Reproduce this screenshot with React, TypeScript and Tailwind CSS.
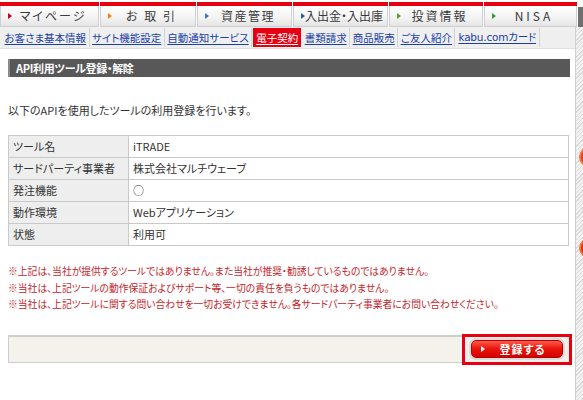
const TABS = [
  { label: "マイページ", width: "w-[100px]", arrow: "border-l-[#d7000f]", track: "tracking-[2px]" },
  { label: "お 取 引", width: "w-[97px]", arrow: "border-l-[#e88a0c]", track: "tracking-[2px]" },
  { label: "資産管理", width: "w-[96px]", arrow: "border-l-[#3877c8]", track: "tracking-[1.5px]" },
  { label: "入出金・入出庫", width: "w-[96px]", arrow: "border-l-[#2a5b9c]", track: "tracking-[0px]" },
  { label: "投資情報", width: "w-[95px]", arrow: "border-l-[#5aa02c]", track: "tracking-[2px]" },
  { label: "NISA", width: "w-[94px]", arrow: "border-l-[#3c9a2a]", track: "tracking-[3px]" },
];

const SUB_LINKS = [
  "お客さま基本情報",
  "サイト機能設定",
  "自動通知サービス",
  "電子契約",
  "書類請求",
  "商品販売",
  "ご友人紹介",
  "kabu.comカード",
];

const ROWS = [
  ["ツール名", "iTRADE"],
  ["サードパーティ事業者", "株式会社マルチウェーブ"],
  ["発注機能", "○"],
  ["動作環境", "Webアプリケーション"],
  ["状態", "利用可"],
];

const NOTES = [
  "※上記は、当社が提供するツールではありません。また当社が推奨・勧誘しているものではありません。",
  "※当社は、上記ツールの動作保証およびサポート等、一切の責任を負うものではありません。",
  "※当社は、上記ツールに関する問い合わせを一切お受けできません。各サードパーティ事業者にお問い合わせください。",
];

export default function App() {
  return (
    <div className="w-[583px] h-[400px] overflow-hidden bg-white font-['Noto_Sans_CJK_JP','Noto_Sans',sans-serif] [font-feature-settings:'palt'] text-[#333]">
      {/* ── Global nav ───────────────────────────── */}
      <div className="flex h-[27px] pt-[2px]">
        {TABS.map((t) => (
          <div key={t.label} className={`${t.width} flex flex-col pr-px`}>
            <div className="h-[4px] bg-[#e60012]" />
            <div className="flex-1 flex items-center pl-[7px] border border-t-0 border-[#cfcfcf] bg-[linear-gradient(#ffffff,#f3f3f3_60%,#e4e4e4)]">
              <span className={`w-0 h-0 border-y-[3.5px] border-y-transparent border-l-[4px] ${t.arrow}`} />
              <span className={`flex-1 text-center whitespace-nowrap text-[12px] leading-none pr-[4px] text-[#3a3a3a] ${t.track}`}>
                {t.label}
              </span>
            </div>
          </div>
        ))}
        <div className="flex-1 mt-[5px] bg-[#707070]" />
      </div>

      <div className="flex h-[373px]">
        {/* ── Main column ────────────────────────── */}
        <div className="w-[575px] flex flex-col">
          {/* Sub nav */}
          <div className="h-[22px] flex items-center pl-[2px] bg-[#efefef] border-b border-[#e2e2e2]">
            {SUB_LINKS.map((s) =>
              s === "電子契約" ? (
                <span
                  key={s}
                  className="h-[19px] px-[3px] mx-[1px] flex items-center bg-[#e60012] text-white text-[10.5px] underline underline-offset-2"
                >
                  {s}
                </span>
              ) : s.startsWith("kabu") ? (
                <span
                  key={s}
                  className="h-[19px] px-[3px] flex items-center border-r border-[#d4d4d4] font-['DejaVu_Sans','Noto_Sans_CJK_JP',sans-serif] text-[10.5px] tracking-[-0.2px] text-[#1b3fa8] underline underline-offset-2"
                >
                  {s}
                </span>
              ) : (
                <span
                  key={s}
                  className="h-[19px] px-[2.5px] flex items-center border-r border-[#d4d4d4] text-[10.5px] text-[#1b3fa8] underline underline-offset-2"
                >
                  {s}
                </span>
              )
            )}
          </div>

          <div className="pl-[8px] pr-[5px] pt-[10px]">
            {/* Title bar */}
            <div className="h-[18px] flex items-center pl-[6px] bg-[#585858] border-l-2 border-[#8a8a8a]">
              <span className="text-white text-[11px] font-bold leading-none tracking-[-0.3px]">API利用ツール登録・解除</span>
            </div>

            <p className="mt-[26px] text-[11px] leading-[14px]">以下のAPIを使用したツールの利用登録を行います。</p>

            {/* Tool table */}
            <table className="mt-[18px] w-[561px] border-collapse text-[11px]">
              <tbody>
                {ROWS.map(([k, v]) => (
                  <tr key={k} className="h-[22px]">
                    <td className="w-[120px] pl-[4px] border border-[#c9c9c9] bg-[#eeeeee]">{k}</td>
                    <td className="pl-[4px] border border-[#c9c9c9]">{v}</td>
                  </tr>
                ))}
              </tbody>
            </table>

            {/* Notes */}
            <div className="mt-[17px] flex flex-col whitespace-nowrap text-[9.8px] leading-[16.5px] text-[#c3262d]">
              {NOTES.map((n) => (
                <p key={n}>{n}</p>
              ))}
            </div>

            {/* Action bar */}
            <div className="mt-[22px] h-[28px] flex items-center justify-end bg-[#f5f2eb] border border-[#cdcdcd] border-t-2">
              <div className="w-[104px] h-[25px] flex items-center justify-center outline-3 outline-[#e60012] bg-[#f3f0ea]">
                <button className="w-[92px] h-[18px] flex items-center rounded-[5px] border border-[#b80000] ring-2 ring-[#dcdcdc] bg-[linear-gradient(#ff5a4a,#e8140a_50%,#d40000)] text-white">
                  <span className="ml-[9px] w-0 h-0 border-y-[3.5px] border-y-transparent border-l-[4px] border-l-white" />
                  <span className="flex-1 text-center pr-[2px] text-[11px] font-bold tracking-[1px] leading-none">登録する</span>
                </button>
              </div>
            </div>
          </div>
        </div>

        {/* ── Right scroll strip ─────────────────── */}
        <div className="relative flex-1 bg-[repeating-linear-gradient(135deg,#d9d9d9_0px,#d9d9d9_1px,#f2f2f2_1px,#f2f2f2_3px)] border-l border-[#cfcfcf]">
          <div className="absolute left-[3px] top-[120px] w-[20px] h-[20px] rounded-full bg-[#e53a22] border-2 border-[#f07a3a]" />
          <div className="absolute left-[3px] top-[211px] w-[20px] h-[20px] rounded-full bg-[#e02a1a] border-2 border-[#f07a3a]" />
        </div>
      </div>
    </div>
  );
}
